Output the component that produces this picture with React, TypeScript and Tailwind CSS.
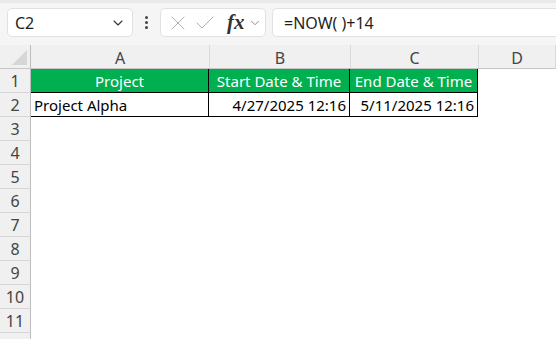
import { ChevronDown, X, Check } from "lucide-react";

const font = { fontFamily: '"Noto Sans", "Liberation Sans", sans-serif' };

const cols = [
  { key: "A", w: "w-[179px]" },
  { key: "B", w: "w-[141px]" },
  { key: "C", w: "w-[128px]" },
  { key: "D", w: "flex-1" },
];

const FormulaBar = () => (
  <div className="h-[45px] bg-[#f5f5f5] border-t-[3px] border-[#e9e9e9] flex items-start pt-[5px] pl-[7px] gap-0">
    <div className="w-[126px] h-[29px] bg-white border border-[#e1e1e1] rounded-[5px] flex items-center justify-between pl-[7px] pr-[6px]">
      <span className="text-[16px] text-[#1f1f1f]">C2</span>
      <ChevronDown size={16} strokeWidth={1.6} className="text-[#333]" />
    </div>
    <div className="w-[27px] h-[29px] flex flex-col items-center justify-center gap-[2px]">
      <span className="w-[3px] h-[3px] bg-[#444] rounded-full" />
      <span className="w-[3px] h-[3px] bg-[#444] rounded-full" />
      <span className="w-[3px] h-[3px] bg-[#444] rounded-full" />
    </div>
    <div className="w-[106px] h-[29px] bg-white border border-[#e1e1e1] rounded-[5px] flex items-center pl-[5px]">
      <X size={24} strokeWidth={1} className="text-[#b0b0b0]" />
      <Check size={24} strokeWidth={1} className="text-[#b0b0b0] ml-[3px]" />
      <span
        className="ml-[10px] text-[21px] italic font-bold text-[#333] leading-none"
        style={{ fontFamily: '"Liberation Serif", serif' }}
      >
        fx
      </span>
      <ChevronDown size={14} strokeWidth={1.4} className="text-[#777] ml-[3px]" />
    </div>
    <div className="ml-[6px] flex-1 h-[29px] bg-white border border-[#e1e1e1] border-r-0 rounded-l-[5px] flex items-center pl-[11px]">
      <span className="text-[16px] text-[#1f1f1f]">=NOW( )+14</span>
    </div>
  </div>
);

const HeaderRow = () => (
  <div className="flex h-[24px] bg-[#f0f0f0] border-b border-[#c6c6c6]">
    <div className="w-[31px] border-r border-[#bdbdbd] relative overflow-hidden">
      <div className="absolute right-[3px] bottom-[3px] w-0 h-0 border-l-[15px] border-l-transparent border-b-[15px] border-b-[#d6d6d6]" />
    </div>
    {cols.map((c) => (
      <div
        key={c.key}
        className={`${c.w} border-r border-[#dadada] flex items-center justify-center pt-[2px] text-[16px] text-[#444]`}
      >
        {c.key}
      </div>
    ))}
  </div>
);

const RowHead = ({ n }: { n?: number }) => (
  <div className="w-[31px] shrink-0 bg-[#f0f0f0] border-r border-[#bdbdbd] border-b border-b-[#d6d6d6] flex items-center justify-center pt-[1px] text-[16px] text-[#444]">
    {n}
  </div>
);

const cell = "border-r border-b border-black flex items-center pt-[2px] text-[15px]";

const App = () => {
  const empty = [3, 4, 5, 6, 7, 8, 9, 10, 11];
  return (
    <div className="w-[556px] h-[339px] overflow-hidden bg-white" style={font}>
      <FormulaBar />
      <HeaderRow />
      <div className="flex h-[24px]">
        <RowHead n={1} />
        <div className={`w-[178px] bg-[#00b050] justify-center text-white ${cell}`}>Project</div>
        <div className={`w-[141px] bg-[#00b050] justify-center text-white ${cell}`}>Start Date &amp; Time</div>
        <div className={`w-[128px] bg-[#00b050] justify-center text-white ${cell}`}>End Date &amp; Time</div>
      </div>
      <div className="flex h-[24px]">
        <RowHead n={2} />
        <div className={`w-[178px] pl-[3px] text-black ${cell}`}>Project Alpha</div>
        <div className={`w-[141px] justify-end pr-[3px] text-black ${cell}`}>4/27/2025 12:16</div>
        <div className={`w-[128px] justify-end pr-[3px] text-black ${cell}`}>5/11/2025 12:16</div>
      </div>
      {empty.map((n) => (
        <div key={n} className="flex h-[24px]">
          <RowHead n={n} />
        </div>
      ))}
      <div className="flex h-[24px]">
        <RowHead />
      </div>
    </div>
  );
};

export default App;
